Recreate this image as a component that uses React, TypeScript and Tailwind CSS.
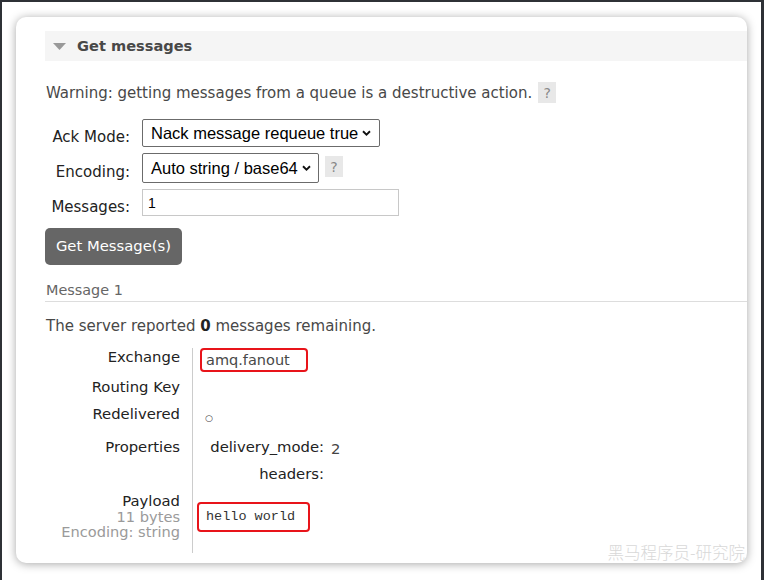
import React from 'react';

const body = { fontFamily: '"DejaVu Sans", Verdana, sans-serif' };
const arial = { fontFamily: '"Liberation Sans", Arial, sans-serif' };
const mono = { fontFamily: '"Liberation Mono", "Courier New", monospace' };
const cjk = { fontFamily: '"Noto Sans CJK SC", sans-serif' };

function Chevron() {
    return (
        <svg width="9" height="6" viewBox="0 0 9 6" className="ml-[4px]">
            <path d="M1 1.2 L4.5 4.6 L8 1.2" fill="none" stroke="#111" strokeWidth="1.9" />
        </svg>
    );
}

function Help({ className = '' }: { className?: string }) {
    return (
        <span className={`inline-flex h-[21px] w-[18px] items-center justify-center bg-[#e8e8e8] text-[14px] text-[#888] ${className}`}>
            ?
        </span>
    );
}

function Select({ value, width, height }: { value: string; width: number; height: number }) {
    return (
        <div
            className="flex items-center rounded-[2px] border border-[#6b6b6b] bg-white pl-[8px] text-[16.5px] text-black"
            style={{ ...arial, width, height }}
        >
            {value}
            <Chevron />
        </div>
    );
}

export default function App() {
    return (
        <div className="h-[580px] w-[764px] overflow-hidden border-t-2 border-l-2 border-r-[3px] border-[#2e3136] bg-white pl-[14px] pt-[15px]" style={body}>
            <div className="relative h-[546px] w-[731px] overflow-hidden rounded-[10px] bg-white pl-[29px] pt-[14px] shadow-[0_1px_10px_rgba(0,0,0,0.35)]">
                {/* Section header */}
                <div className="flex h-[30px] items-center bg-[#f5f5f5]">
                    <svg width="13" height="7" viewBox="0 0 13 7" className="ml-[8px]">
                        <path d="M0 0 H13 L6.5 7 Z" fill="#999" />
                    </svg>
                    <span className="ml-[11px] text-[14.6px] font-bold text-[#484848]">Get messages</span>
                </div>

                {/* Warning */}
                <div className="mt-[21px] flex items-center text-[15px] leading-[18px] text-[#484848]">
                    <span className="ml-[1px]">Warning: getting messages from a queue is a destructive action.</span>
                    <Help className="ml-[6px]" />
                </div>

                {/* Form */}
                <div className="mt-[16px] flex flex-col gap-[6px] text-[15px] leading-[18px] text-[#222]">
                    <div className="flex items-start">
                        <span className="mt-[9px] w-[85px] text-right">Ack Mode:</span>
                        <div className="ml-[12px]">
                            <Select value="Nack message requeue true" width={238} height={28} />
                        </div>
                    </div>
                    <div className="flex items-start">
                        <span className="mt-[10px] w-[85px] text-right">Encoding:</span>
                        <div className="ml-[12px]">
                            <Select value="Auto string / base64" width={177} height={30} />
                        </div>
                        <Help className="ml-[6px] mt-[3px]" />
                    </div>
                    <div className="flex items-start">
                        <span className="mt-[9px] w-[85px] text-right">Messages:</span>
                        <div
                            className="ml-[12px] flex h-[27px] w-[257px] items-center border border-[#c8c8c8] pl-[5px] text-[14px] text-black"
                            style={arial}
                        >
                            1
                        </div>
                    </div>
                </div>

                <button className="mt-[12px] flex h-[37px] w-[137px] items-center justify-center rounded-[5px] bg-[#666] text-[14.8px] text-white">
                    Get Message(s)
                </button>

                {/* Message result */}
                <div className="mt-[16px] border-b border-[#ddd] pb-[2px] pl-[1px] text-[14.4px] leading-[18px] text-[#666]">
                    Message 1
                </div>

                <div className="mt-[15px] pl-[1px] text-[15px] leading-[18px] text-[#484848]">
                    The server reported <b className="text-[#222]">0</b> messages remaining.
                </div>

                <div className="mt-[13px] grid grid-cols-[147px_auto] text-[14.8px] leading-[18px] text-[#222]">
                    {/* Exchange */}
                    <div className="h-[30px] pr-[12px] text-right">Exchange</div>
                    <div className="border-l border-[#ccc] pl-[7px]">
                        <div className="flex h-[24px] w-[108px] items-center rounded-[4px] border-2 border-[#e8141a] pl-[4px] text-[14.5px] text-[#484848]">
                            amq.fanout
                        </div>
                    </div>

                    {/* Routing Key */}
                    <div className="h-[27px] pr-[12px] text-right">Routing Key</div>
                    <div className="border-l border-[#ccc]" />

                    {/* Redelivered */}
                    <div className="h-[33px] pr-[12px] text-right">Redelivered</div>
                    <div className="border-l border-[#ccc] pl-[12px] pt-[4px] text-[9px] text-[#444]">○</div>

                    {/* Properties */}
                    <div className="h-[55px] pr-[12px] text-right">Properties</div>
                    <div className="border-l border-[#ccc] pl-[15px]">
                        <div className="grid grid-cols-[116px_auto] gap-y-[7px]">
                            <span className="whitespace-nowrap text-right">delivery_mode:</span>
                            <span className="pl-[7px] pt-[2px] text-[#444]">2</span>
                            <span className="text-right">headers:</span>
                            <span />
                        </div>
                    </div>

                    {/* Payload */}
                    <div className="h-[60px] pr-[12px] text-right">
                        <div className="leading-[16px]">Payload</div>
                        <div className="text-[14.6px] leading-[15px] text-[#9a9a9a]">11 bytes</div>
                        <div className="text-[14.6px] leading-[15px] text-[#9a9a9a]">Encoding: string</div>
                    </div>
                    <div className="border-l border-[#ccc] pl-[4px] pt-[9px]">
                        <div
                            className="flex h-[30px] w-[113px] items-center rounded-[4px] border-2 border-[#e8141a] pl-[7px] text-[13.5px] text-[#333]"
                            style={mono}
                        >
                            hello world
                        </div>
                    </div>
                </div>

                {/* Watermark */}
                <span className="absolute bottom-[0px] right-[2px] text-[16.5px] font-light leading-[22px] text-[#d8d8d8]" style={cjk}>
                    黑马程序员-研究院
                </span>
            </div>
        </div>
    );
}
